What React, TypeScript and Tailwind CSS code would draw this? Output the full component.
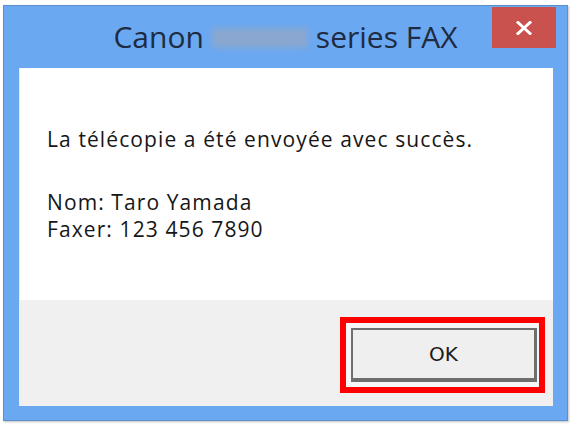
import React from 'react';

const TITLE_FONT = { fontFamily: '"Open Sans", "Noto Sans", "Liberation Sans", sans-serif' };
const BODY_FONT = { fontFamily: '"Open Sans", "Noto Sans", "Liberation Sans", sans-serif' };
const BUTTON_FONT = { fontFamily: '"DejaVu Sans", "Open Sans", "Liberation Sans", sans-serif' };

const CloseGlyph = () => (
  <svg width="18" height="14" viewBox="0 0 18 14" fill="none">
    <path d="M3 1.5 L15 12.5 M15 1.5 L3 12.5" stroke="#ffffff" strokeWidth="3" strokeLinecap="square" />
  </svg>
);

export default function App() {
  return (
    <div className="w-[571px] h-[424px] bg-white pt-[5px] pl-[3px]">
      <div className="w-[565px] h-[416px] bg-[#6aa8f2] border border-[#5a8fd0] shadow-[1px_1px_2px_rgba(0,0,0,0.25)] flex flex-col">
        {/* title bar */}
        <div className="h-[62px] grid grid-cols-[1fr_auto_1fr]" style={TITLE_FONT}>
          <div />
          <div className="flex items-start h-[62px] text-[30px] leading-[62px] text-[#1e2b40] whitespace-nowrap">
            <span>Canon</span>
            <span className="mx-[8px] mt-[22px] w-[96px] h-[20px] bg-[#8aa7cf] blur-[3px]" />
            <span>series FAX</span>
          </div>
          <div className="flex justify-end items-start pr-[11px] pt-px">
            <button className="w-[64px] h-[41px] bg-[#c9524e] flex items-center justify-center">
              <CloseGlyph />
            </button>
          </div>
        </div>

        {/* client area */}
        <div className="ml-[15px] w-[534px] h-[338px] flex flex-col border-l border-[#e4eefb]">
          <div className="h-[232px] bg-white pl-[27px] pt-[58px] text-[21px] leading-[27px] tracking-[1.1px] text-[#161616]" style={BODY_FONT}>
            <p>La télécopie a été envoyée avec succès.</p>
            <p className="mt-[36px]">Nom: Taro Yamada</p>
            <p>Faxer: 123 456 7890</p>
          </div>
          <div className="flex-1 bg-[#f0f0f0] flex justify-end items-start pt-[17px] pr-[8px]" style={BUTTON_FONT}>
            <div className="border-[6px] border-[#ff0000] bg-[#f6f6f6] pt-[5px] pb-[5px] pl-[5px] pr-[2px]">
              <button className="w-[186px] h-[54px] bg-[#efefef] border-t-2 border-l-2 border-b-4 border-r-[3px] border-[#6e6e6e] text-[20px] text-[#1a1a1a] flex items-center justify-center">
                OK
              </button>
            </div>
          </div>
        </div>
      </div>
    </div>
  );
}
